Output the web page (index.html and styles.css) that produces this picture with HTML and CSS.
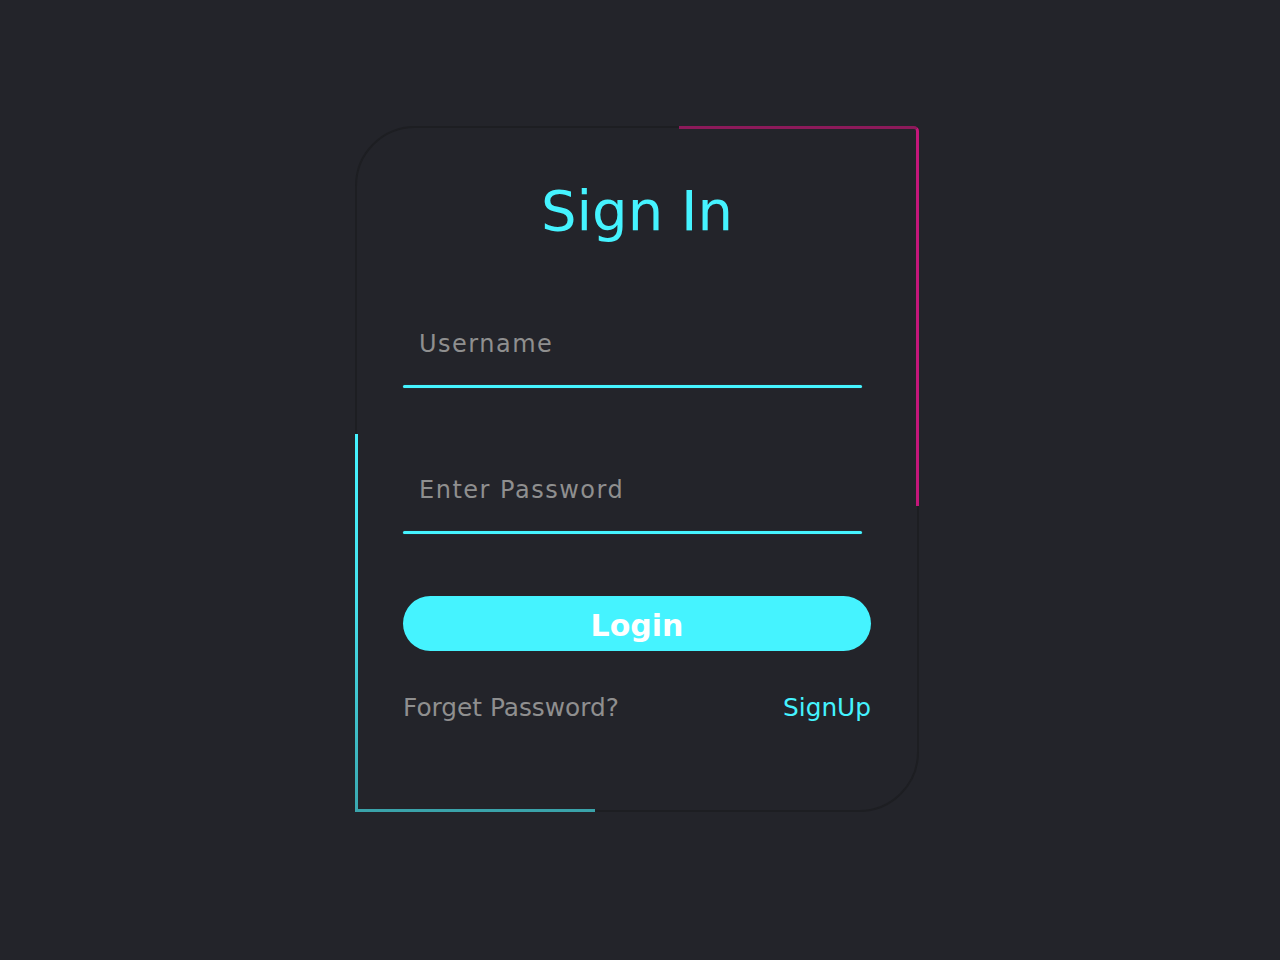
FILE: index.html
```html
<!DOCTYPE html>
<html lang="en">
<head>
<meta charset="utf-8">
<title>Sign In</title>
<link rel="stylesheet" href="styles.css">
</head>
<body>
<main class="page">
  <form class="card">
    <span class="edge edge-pink"></span>
    <span class="edge edge-cyan"></span>
    <h2 class="title">Sign In</h2>
    <div class="field field-first">
      <span class="label">Username</span>
      <i class="line"></i>
    </div>
    <div class="field field-second">
      <span class="label">Enter Password</span>
      <i class="line"></i>
    </div>
    <button type="button" class="login">Login</button>
    <div class="links">
      <span class="forget">Forget Password?</span>
      <span class="signup">SignUp</span>
    </div>
  </form>
</main>
</body>
</html>
```
FILE: styles.css
```css
* { box-sizing: border-box; }
html, body {
  margin: 0;
  padding: 0;
  background: #23242a;
  font-family: "DejaVu Sans", Verdana, sans-serif;
}
.page {
  display: flex;
  justify-content: center;
  padding: 126px 6px 0 0;
  min-height: 960px;
}
.card {
  position: relative;
  width: 564px;
  height: 686px;
  padding: 51px 46px 0 46px;
  background: #23242a;
  border: 2px solid #1d1e22;
  border-radius: 60px 4px 60px 4px;
  display: flex;
  flex-direction: column;
}
.edge {
  position: absolute;
  pointer-events: none;
}
.edge-pink {
  top: -2px;
  right: -2px;
  width: 240px;
  height: 380px;
  border-top: 3px solid #8c1a5a;
  border-right: 3px solid #c4177a;
  border-top-right-radius: 5px;
}
.edge-cyan {
  left: -2px;
  bottom: -2px;
  width: 240px;
  height: 378px;
  border-bottom: 3px solid #3aa3aa;
  border-left: 3px solid transparent;
  background:
    linear-gradient(to bottom, #45f3ff, #45e0ea 45%, #3aa8b0) left top / 3px 100% no-repeat;
  background-origin: border-box;
}
.title {
  margin: 0;
  text-align: center;
  color: #45f3ff;
  font-size: 56px;
  font-weight: normal;
  line-height: 64px;
}
.field {
  width: 98%;
  display: flex;
  flex-direction: column;
}
.field-first { margin-top: 87px; }
.field-second { margin-top: 88px; }
.label {
  padding: 0 16px;
  font-size: 24px;
  line-height: 28px;
  letter-spacing: 1.5px;
  color: #8f8f8f;
}
.line {
  display: block;
  margin-top: 27px;
  height: 3px;
  background: #45f3ff;
  border-radius: 2px;
  box-shadow: 0 0 1px rgba(69, 243, 255, 0.4);
}
.login {
  margin-top: 62px;
  height: 55px;
  width: 100%;
  border: none;
  border-radius: 28px;
  background: #45f3ff;
  color: #ffffff;
  font-family: "DejaVu Sans", Verdana, sans-serif;
  font-size: 30px;
  font-weight: bold;
  padding: 3px 0 0 0;
}
.links {
  margin-top: 43px;
  display: flex;
  justify-content: space-between;
  font-size: 24.8px;
  line-height: 28px;
}
.forget { color: #8f8f8f; }
.signup { color: #45f3ff; }
```
